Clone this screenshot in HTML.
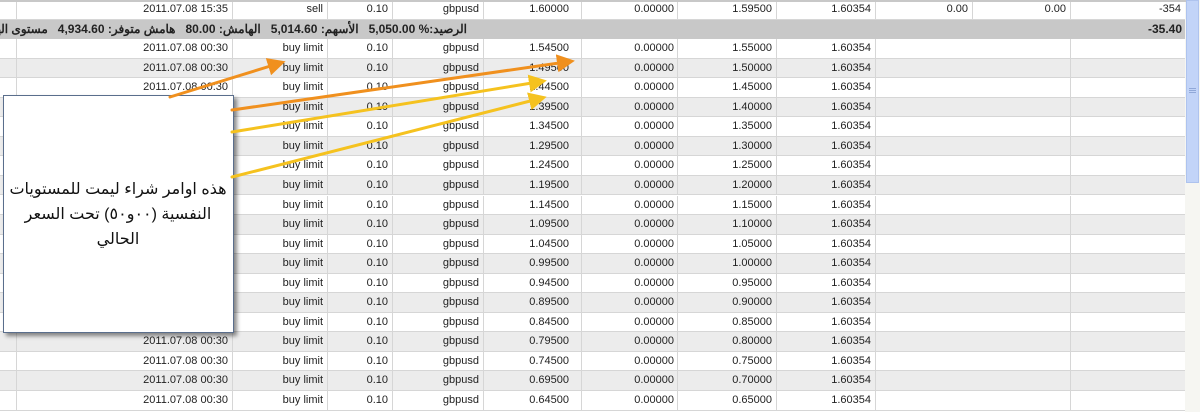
<!DOCTYPE html>
<html><head><meta charset="utf-8">
<style>
body{margin:0;width:1200px;height:412px;overflow:hidden;background:#fff;font-family:"Liberation Sans","Noto Sans CJK SC",sans-serif;font-size:11px;color:#222;position:relative}
.r{position:absolute;left:0;width:1186px;height:19.55px;background:#fff}
.g{background:#ececec}
.r span{position:absolute;top:0;height:18.55px;line-height:19px;border-right:1px solid #d6d6d6;border-bottom:1px solid #d6d6d6;text-align:right;box-sizing:content-box;white-space:nowrap;overflow:hidden;direction:ltr;unicode-bidi:isolate}
.a{left:0;width:16px}
.b{left:17px;width:211px;padding-right:4px}
.c{left:233px;width:90px;padding-right:4px}
.d{left:328px;width:60px;padding-right:4px}
.e{left:393px;width:86px;padding-right:4px}
.f{left:484px;width:85px;padding-right:12px}
.h{left:582px;width:92px;padding-right:3px}
.i{left:678px;width:94px;padding-right:4px}
.j{left:777px;width:94px;padding-right:4px}
.k{left:876px;width:92px;padding-right:4px}
.l{left:973px;width:93px;padding-right:4px}
.m{left:1071px;width:110px;padding-right:4px}
.kk{left:876px;width:194px}
.sum{position:absolute;left:0;top:19.55px;width:1186px;height:19.55px;background:#c8c8c8;font-weight:bold;line-height:19px;font-size:12px;overflow:hidden}
.sum i{font-style:normal;unicode-bidi:isolate;direction:rtl}
</style></head><body>
<div style="position:absolute;left:0;top:0;width:1186px;height:2px;background:#c8c8c8;z-index:2"></div>
<div class="r" style="top:0"><span class="a"></span><span class="b">2011.07.08 15:35</span><span class="c">sell</span><span class="d">0.10</span><span class="e">gbpusd</span><span class="f">1.60000</span><span class="h">0.00000</span><span class="i">1.59500</span><span class="j">1.60354</span><span class="k">0.00</span><span class="l">0.00</span><span class="m"></span></div>
<div style="position:absolute;left:1140px;top:0;width:41px;line-height:19px;text-align:right;z-index:2">-354</div>
<div class="sum"><div style="position:absolute;right:719px;top:0;white-space:nowrap;direction:ltr"><i>مستوى الهامش</i>&nbsp;&nbsp; 4,934.60 <i>هامش متوفر:</i>&nbsp;&nbsp; 80.00 <i>الهامش:</i>&nbsp;&nbsp; 5,014.60 <i>الأسهم:</i>&nbsp;&nbsp; 5,050.00 %<i>الرصيد:</i></div><div style="position:absolute;right:4px;top:0">&#8206;-35.40</div></div>
<div class="r" style="top:39.1px"><span class="a"></span><span class="b">2011.07.08 00:30</span><span class="c">buy limit</span><span class="d">0.10</span><span class="e">gbpusd</span><span class="f">1.54500</span><span class="h">0.00000</span><span class="i">1.55000</span><span class="j">1.60354</span><span class="kk"></span><span class="m"></span></div>
<div class="r g" style="top:58.65px"><span class="a"></span><span class="b">2011.07.08 00:30</span><span class="c">buy limit</span><span class="d">0.10</span><span class="e">gbpusd</span><span class="f">1.49500</span><span class="h">0.00000</span><span class="i">1.50000</span><span class="j">1.60354</span><span class="kk"></span><span class="m"></span></div>
<div class="r" style="top:78.2px"><span class="a"></span><span class="b">2011.07.08 00:30</span><span class="c">buy limit</span><span class="d">0.10</span><span class="e">gbpusd</span><span class="f">1.44500</span><span class="h">0.00000</span><span class="i">1.45000</span><span class="j">1.60354</span><span class="kk"></span><span class="m"></span></div>
<div class="r g" style="top:97.75px"><span class="a"></span><span class="b">2011.07.08 00:30</span><span class="c">buy limit</span><span class="d">0.10</span><span class="e">gbpusd</span><span class="f">1.39500</span><span class="h">0.00000</span><span class="i">1.40000</span><span class="j">1.60354</span><span class="kk"></span><span class="m"></span></div>
<div class="r" style="top:117.3px"><span class="a"></span><span class="b">2011.07.08 00:30</span><span class="c">buy limit</span><span class="d">0.10</span><span class="e">gbpusd</span><span class="f">1.34500</span><span class="h">0.00000</span><span class="i">1.35000</span><span class="j">1.60354</span><span class="kk"></span><span class="m"></span></div>
<div class="r g" style="top:136.85px"><span class="a"></span><span class="b">2011.07.08 00:30</span><span class="c">buy limit</span><span class="d">0.10</span><span class="e">gbpusd</span><span class="f">1.29500</span><span class="h">0.00000</span><span class="i">1.30000</span><span class="j">1.60354</span><span class="kk"></span><span class="m"></span></div>
<div class="r" style="top:156.4px"><span class="a"></span><span class="b">2011.07.08 00:30</span><span class="c">buy limit</span><span class="d">0.10</span><span class="e">gbpusd</span><span class="f">1.24500</span><span class="h">0.00000</span><span class="i">1.25000</span><span class="j">1.60354</span><span class="kk"></span><span class="m"></span></div>
<div class="r g" style="top:175.95px"><span class="a"></span><span class="b">2011.07.08 00:30</span><span class="c">buy limit</span><span class="d">0.10</span><span class="e">gbpusd</span><span class="f">1.19500</span><span class="h">0.00000</span><span class="i">1.20000</span><span class="j">1.60354</span><span class="kk"></span><span class="m"></span></div>
<div class="r" style="top:195.5px"><span class="a"></span><span class="b">2011.07.08 00:30</span><span class="c">buy limit</span><span class="d">0.10</span><span class="e">gbpusd</span><span class="f">1.14500</span><span class="h">0.00000</span><span class="i">1.15000</span><span class="j">1.60354</span><span class="kk"></span><span class="m"></span></div>
<div class="r g" style="top:215.05px"><span class="a"></span><span class="b">2011.07.08 00:30</span><span class="c">buy limit</span><span class="d">0.10</span><span class="e">gbpusd</span><span class="f">1.09500</span><span class="h">0.00000</span><span class="i">1.10000</span><span class="j">1.60354</span><span class="kk"></span><span class="m"></span></div>
<div class="r" style="top:234.6px"><span class="a"></span><span class="b">2011.07.08 00:30</span><span class="c">buy limit</span><span class="d">0.10</span><span class="e">gbpusd</span><span class="f">1.04500</span><span class="h">0.00000</span><span class="i">1.05000</span><span class="j">1.60354</span><span class="kk"></span><span class="m"></span></div>
<div class="r g" style="top:254.15px"><span class="a"></span><span class="b">2011.07.08 00:30</span><span class="c">buy limit</span><span class="d">0.10</span><span class="e">gbpusd</span><span class="f">0.99500</span><span class="h">0.00000</span><span class="i">1.00000</span><span class="j">1.60354</span><span class="kk"></span><span class="m"></span></div>
<div class="r" style="top:273.7px"><span class="a"></span><span class="b">2011.07.08 00:30</span><span class="c">buy limit</span><span class="d">0.10</span><span class="e">gbpusd</span><span class="f">0.94500</span><span class="h">0.00000</span><span class="i">0.95000</span><span class="j">1.60354</span><span class="kk"></span><span class="m"></span></div>
<div class="r g" style="top:293.25px"><span class="a"></span><span class="b">2011.07.08 00:30</span><span class="c">buy limit</span><span class="d">0.10</span><span class="e">gbpusd</span><span class="f">0.89500</span><span class="h">0.00000</span><span class="i">0.90000</span><span class="j">1.60354</span><span class="kk"></span><span class="m"></span></div>
<div class="r" style="top:312.8px"><span class="a"></span><span class="b">2011.07.08 00:30</span><span class="c">buy limit</span><span class="d">0.10</span><span class="e">gbpusd</span><span class="f">0.84500</span><span class="h">0.00000</span><span class="i">0.85000</span><span class="j">1.60354</span><span class="kk"></span><span class="m"></span></div>
<div class="r g" style="top:332.35px"><span class="a"></span><span class="b">2011.07.08 00:30</span><span class="c">buy limit</span><span class="d">0.10</span><span class="e">gbpusd</span><span class="f">0.79500</span><span class="h">0.00000</span><span class="i">0.80000</span><span class="j">1.60354</span><span class="kk"></span><span class="m"></span></div>
<div class="r" style="top:351.9px"><span class="a"></span><span class="b">2011.07.08 00:30</span><span class="c">buy limit</span><span class="d">0.10</span><span class="e">gbpusd</span><span class="f">0.74500</span><span class="h">0.00000</span><span class="i">0.75000</span><span class="j">1.60354</span><span class="kk"></span><span class="m"></span></div>
<div class="r g" style="top:371.45px"><span class="a"></span><span class="b">2011.07.08 00:30</span><span class="c">buy limit</span><span class="d">0.10</span><span class="e">gbpusd</span><span class="f">0.69500</span><span class="h">0.00000</span><span class="i">0.70000</span><span class="j">1.60354</span><span class="kk"></span><span class="m"></span></div>
<div class="r" style="top:391px"><span class="a"></span><span class="b">2011.07.08 00:30</span><span class="c">buy limit</span><span class="d">0.10</span><span class="e">gbpusd</span><span class="f">0.64500</span><span class="h">0.00000</span><span class="i">0.65000</span><span class="j">1.60354</span><span class="kk"></span><span class="m"></span></div>

<div style="position:absolute;left:1185px;top:0;width:15px;height:412px;background:#f6f6f2"></div>
<div style="position:absolute;left:1186px;top:0;width:13px;height:183px;background:#c2d4f8;border:1px solid #aec3ee;box-sizing:border-box"></div>
<div style="position:absolute;left:1189px;top:88px;width:7px;height:1px;background:#90a8d8;box-shadow:0 2px 0 #90a8d8,0 4px 0 #90a8d8"></div>

<div style="position:absolute;left:3px;top:95px;width:229px;height:236px;background:#fff;border:1px solid #5a6e8c;box-shadow:3px 3px 4px rgba(0,0,0,.45);z-index:3"></div>
<div style="position:absolute;left:4px;top:177px;width:228px;z-index:4;text-align:center;direction:rtl;font-family:'Liberation Sans','DejaVu Sans',sans-serif;font-size:16px;line-height:25px;color:#111">هذه اوامر شراء ليمت للمستويات<br>النفسية (٠٠و٥٠) تحت السعر<br>الحالي</div>

<svg width="1200" height="412" style="position:absolute;left:0;top:0;z-index:5" viewBox="0 0 1200 412">
<defs>
<marker id="o" markerWidth="6" markerHeight="6" refX="3" refY="3" orient="auto" markerUnits="strokeWidth"><path d="M0,0 L6,3 L0,6 z" fill="#f0901e"/></marker>
<marker id="y" markerWidth="6" markerHeight="6" refX="3" refY="3" orient="auto" markerUnits="strokeWidth"><path d="M0,0 L6,3 L0,6 z" fill="#f5c21f"/></marker>
</defs>
<g stroke-width="3" fill="none" stroke-linecap="round">
<line x1="170" y1="97" x2="277" y2="64" stroke="#f0901e" marker-end="url(#o)"/>
<line x1="232" y1="110" x2="566" y2="62" stroke="#f0901e" marker-end="url(#o)"/>
<line x1="232" y1="132" x2="538" y2="82" stroke="#f5c21f" marker-end="url(#y)"/>
<line x1="232" y1="177" x2="538" y2="99" stroke="#f5c21f" marker-end="url(#y)"/>
</g>
</svg>
</body></html>
